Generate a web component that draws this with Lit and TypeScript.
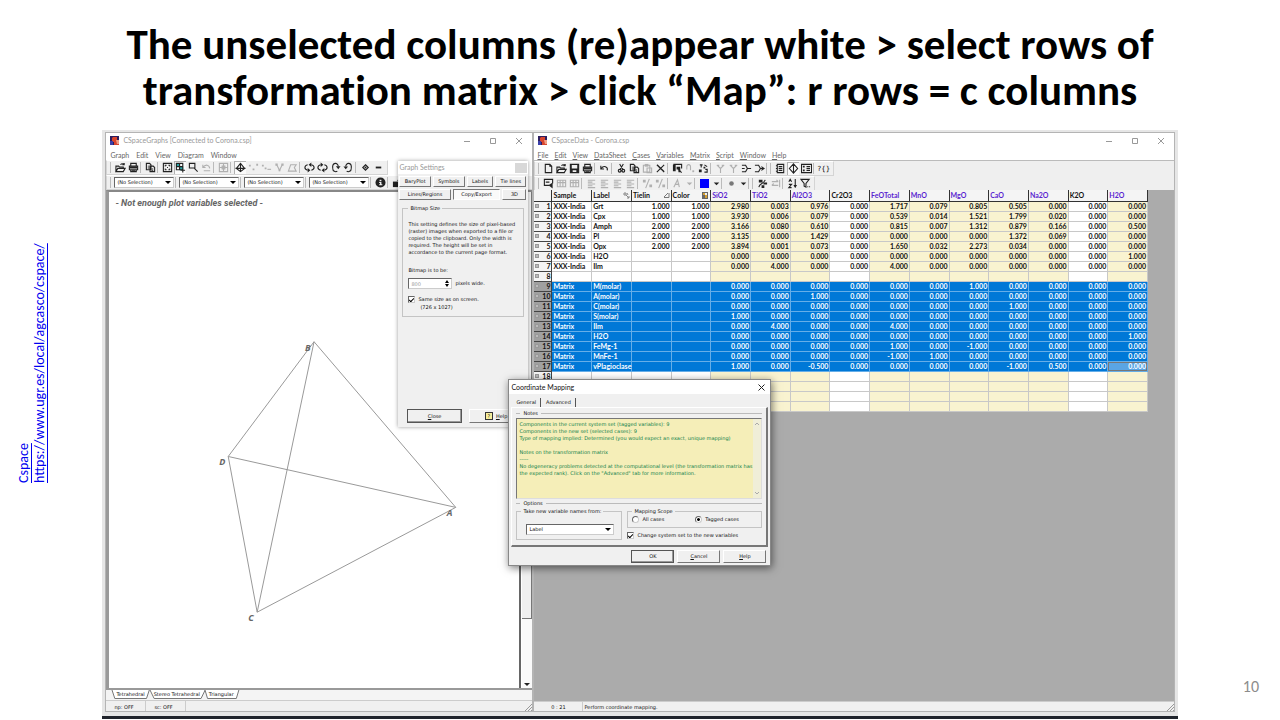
import { LitElement, html, svg, css, nothing } from "lit";
import { customElement, property, state } from "lit/decorators.js";
import { classMap } from "lit/directives/class-map.js";

/* Toolbar glyphs on a 12x12 grid: s = stroke path, f = filled path */
const ICONS: Record<string, { s?: string; f?: string; teal?: string }> = {
  open: { s: "M1 10.500V4.500H4L5 5.500H9V7M1 10.500L3 7H11L9 10.500ZM6 3C7 1.500 9 1.500 10 3M10 1V3H8" },
  print: { s: "M3 4V1.500H9V4M1.500 4.500H10.500V8.500H1.500ZM3 8V10.500H9V8", f: "M2 5H10V7H2ZM4 9H8V10H4Z" },
  copy: { s: "M1.500 1.500H5L6.500 3V8.500H1.500ZM5.500 4.500H9L10.500 6V10.500H5.500Z", f: "M3 4H5V5H3ZM3 6H5V7H3ZM7 7H9V8H7ZM7 8.500H9V9.500H7Z" },
  fit: { s: "M1.500 1.500H10.500V10.500H1.500Z", f: "M3 3H5V4H4V5H3ZM9 3V5H8V4H7V3ZM3 9V7H4V8H5V9ZM9 9H7V8H8V7H9ZM5.500 5.500H6.500V6.500H5.500Z" },
  grid: { s: "M1.500 1.500H8.500V8.500H1.500ZM1.500 5H8.500M5 1.500V8.500M6 9H11M8.500 6.500V11.500", teal: "M1 1H5V5H1ZM5 5H9V9H5Z" },
  zoom: { s: "M1.500 1.500H7.500V6.500H1.500ZM7 7L10.500 10.500" },
  undo: { s: "M2 3V6H5M2 6C5 2 9 3 9.500 7M3 9.500H10" },
  target: { s: "M1.500 1.500H10.500V10.500H1.500ZM6 2V10M2 6H10M4.500 4.500H7.500V7.500H4.500Z" },
  cross: { s: "M6 1.500L10.500 7L6 10.500L1.500 7ZM0.500 7H11.500M6 1V11" },
  dots: { f: "M1 3H3V5H1ZM5 7H7V9H5ZM9 2H11V4H9Z" },
  seg: { f: "M1 3H3V5H1ZM4 6H6V8H4Z", s: "M7 8H11" },
  tri: { s: "M3 3L6 9L9 3", f: "M1.500 1.500H4V4H1.500ZM8 1.500H10.500V4H8ZM5 8H7V10H5Z" },
  region: { s: "M1.500 10L4 3H10L8 6L10 10Z" },
  rotl: { s: "M4 3C0 4 0 8 4 9M8 3C12 4 12 8 8 9", f: "M4 6.500L7 9L4 11.500ZM8 .5L5 3L8 5.500Z" },
  rotr: { s: "M4 3C0 4 0 8 4 9M8 3C12 4 12 8 8 9", f: "M4 .5L7 3L4 5.500ZM8 6.500L5 9L8 11.500Z" },
  rotu: { s: "M3 7C2 0 9 0 9 5M8 10C6 11.500 3 10 3 7", f: "M6.500 4.500H11.500L9 8Z" },
  rotd: { s: "M3 5C3 0 10 0 9 7M4 10C6 11.500 9 10 9 7", f: "M.5 5H5.500L3 8Z" },
  plus: { s: "M6 3L9 6L6 9L3 6Z", f: "M5 5H7V7H5Z" },
  minus: { f: "M3 5H9V7H3Z" },
  info: { f: "M6 0.500A5.500 5.500 0 1 0 6 11.500A5.500 5.500 0 1 0 6 .5ZM5 3H7V4.500H5ZM4.500 5.500H7V8H8V9H4.500V8H5.500V6.500H4.500Z" },
  chip: { f: "M1 5H8V11H1Z", s: "M6 4L10 1" },
  fresh: { s: "M2.500 1.500H7.500L9.500 3.500V10.500H2.500ZM7.500 1.500V3.500H9.500" },
  save: { s: "M1.500 1.500H10.500V10.500H1.500Z", f: "M1.500 1.500H3V6H9V1.500H10.500V10.500H8V8H4V10.500H1.500Z" },
  back: { s: "M2 3V6.500H5.500M2.500 6C5 2 10 4 9 8" },
  cut: { s: "M4 1L7.500 7M8 1L4.500 7M4 7A1.500 1.500 0 1 0 4 10A1.500 1.500 0 1 0 4 7M8 7A1.500 1.500 0 1 0 8 10A1.500 1.500 0 1 0 8 7" },
  paste: { s: "M1.500 2.500H8.500V10H1.500ZM5.500 5.500H10.500V10.500H5.500Z", f: "M3 1H7V4H3Z" },
  del: { s: "M2 2L10 10M10 2L2 10M2.500 2L10 9.500" },
  find: { s: "M1.500 1.500H10.500V6M7 7L10.500 10.500", f: "M1 2H4V9H1ZM5 4H9V10H7V7H5Z" },
  next: { s: "M2 7V4C2 1 6 1 6 4V8", f: "M8 8H10V10H8Z" },
  repl: { s: "M2 2H5M3.500 2V5M8 7H10V10H7M7 2L10 4", f: "M1 7H4V10H1ZM6 4H8V6H6Z" },
  fork: { s: "M2 2L6 6V11M10 2L6 6M4 2V4M8 2V4" },
  merge: { s: "M1 2.500H5L7 6H11M1 9.500H5L7 6M1 6H4" },
  split: { s: "M1 2.500H5L7 6H11M1 9.500H5L7 6M8 4L11 6L8 8" },
  note: { s: "M2.500 1.500H9.500V10.500H2.500ZM4 4H8M4 6H8M4 8H8M1 3H3M1 6H3M1 9H3" },
  diamond: { s: "M6 1L10.500 6L6 11L1.500 6ZM6 1V11" },
  props: { s: "M0.500 1.500H11.500V10.500H0.500ZM6 4H10M6 6H10M6 8H10", f: "M2 3H4V5H2ZM2 7H4V9H2Z" },
  tag: { s: "M7 8H1.500V1.500H10.500V6M3 4.500H7", f: "M10.500 5V11.500L6 8Z" },
  cols: { s: "M1.500 2.500H10.500V9.500H1.500ZM1.500 5H10.500M4.500 3V9.500M7.500 3V9.500" },
  align: { s: "M2 2.500H10M2 4.500H7M2 6.500H10M2 8.500H7M2 10.500H10" },
  dec: { s: "M8 1L4 11", f: "M1 2H4V5H1ZM8 7H11V10H8Z" },
  font: { s: "M2 10L6 2L8 10M3 7H8" },
  drop: { f: "M3 5H9L6 8Z" },
  dot: { f: "M6 3.500A2.500 2.500 0 1 0 6 8.500A2.500 2.500 0 1 0 6 3.500Z" },
  brush: { s: "M2 10C3 5 7 7 9 2", f: "M2 2H6V5H2ZM7 5H11V7H7ZM5 8H8V11H5Z" },
  fill: { s: "M2 4H9M7 2L9 4M2 8H9M4 6L2 8M10.500 2V10" },
  sort: { s: "M2 4L3.500 1.500L5 4M2 7H5L2 10.500H5M9 1V10", f: "M7 7.500H11L9 11Z" },
  filter: { s: "M1 1.500H10L6.500 6V10L4.500 9V6Z", f: "M8 9H9V10H8ZM10 9H11V10H10Z" },
};

const icon = (name: string, color = "#222") => {
  const i = ICONS[name];
  return html`<svg class="ico" viewBox="0 0 12 12" aria-hidden="true">
    ${i.teal ? svg`<path d=${i.teal} fill="#2aa5a5"/>` : nothing}
    ${i.s ? svg`<path d=${i.s} fill="none" stroke=${color} stroke-width="1.2"/>` : nothing}
    ${i.f ? svg`<path d=${i.f} fill=${color} fill-rule="evenodd"/>` : nothing}
  </svg>`;
};

/* "|" separates groups; a trailing "-" is disabled, a trailing "*" is pressed */
const bar = (items: string) => items.split(" ").map((n) => {
  if (n === "|") return html`<span class="sep"></span>`;
  const off = n.endsWith("-");
  const on = n.endsWith("*");
  const key = n.replace(/[-*]$/, "");
  return html`<button class=${classMap({ tool: true, on, narrow: key === "drop" })} ?disabled=${off} aria-label=${key}>${
    key === "blue" ? html`<span class="swatch"></span>` : key === "help" ? "?{}" : icon(key, off ? "#b0b0b0" : key === "dot" ? "#777" : "#222")
  }</button>`;
});

const shared = css`
  * { box-sizing: border-box; }
  button, select, input { font: inherit; color: inherit; margin: 0; }
  .ico { display: block; width: 12px; height: 12px; }
  .titlebar { display: flex; align-items: center; height: 15px; padding: 0 1px 0 4px; gap: 4px; color: #999; background: #fff; }
  .titlebar svg { display: block; }
  .grow { flex: 1; }
  .winbtn { width: 24px; height: 12px; padding: 0; border: 0; background: none; display: grid; place-items: center; margin-left: -2px; }
  .menu { display: flex; gap: 7px; padding: 0 4px; height: 12px; color: #666; background: #fff; }
  .menu button { border: 0; background: none; padding: 2px 0 0; line-height: 11px; }
  .toolbar { display: flex; align-items: center; width: max-content; max-width: 100%; height: 15px; padding: 0 3px; gap: 1px; background: #f0f0f0; border: 1px solid #d4d4d4; border-top-color: #fff; overflow: hidden; }
  .tool { flex: none; min-width: 12px; height: 13px; padding: 0; border: 0; background: none; font: 7px "DejaVu Sans", sans-serif; line-height: 12px; display: grid; place-items: center; }
  .tool.on { background: #fbfbfb; box-shadow: inset 1px 1px #b0b0b0; }
  .tool.narrow { min-width: 9px; width: 9px; }
  .tool .ico { width: 11px; height: 11px; }
  .swatch { display: block; width: 9px; height: 9px; background: #00f; }
  .sep { flex: none; width: 3px; height: 11px; border-left: 1px solid #bbb; }
  .small { font: 5px/7px "DejaVu Sans", sans-serif; color: #111; }
  .push { background: #f0f0f0; border: 1px solid; border-color: #fff #777 #777 #fff; padding: 0; text-align: center; }
  .push.default { border-color: #555; box-shadow: inset -1px -1px #999; }
  select { appearance: none; border: 1px solid; border-color: #666 #ccc #ccc #666; border-radius: 0; padding: 0 2px; background: #fff; }
  .combo { position: relative; display: block; }
  .combo select { width: 100%; height: 100%; display: block; }
  .combo::after { content: ""; position: absolute; right: 3px; top: 4px; border: 3px solid transparent; border-top-color: #000; border-bottom: 0; }
  fieldset { margin: 0; border: 1px solid #c4c4c4; min-width: 0; padding: 0 4px; }
  legend { padding: 0 2px; }
  .tick { appearance: none; flex: none; width: 7px; height: 7px; border: 1px solid; border-color: #666 #ccc #ccc #666; background: #fff; display: grid; place-items: center; overflow: hidden; }
  .tick:checked::before { content: ""; width: 2px; height: 4px; border: solid #000; border-width: 0 1px 1px 0; transform: rotate(45deg); }
  .tick.radio { border-radius: 50%; }
  .tick.radio:checked::before { width: 3px; height: 3px; border: 0; border-radius: 50%; background: #000; }
  .line { display: flex; align-items: center; gap: 3px; }
`;

const logo = html`<svg width="9" height="9" viewBox="0 0 9 9" aria-hidden="true">
  <rect width="9" height="9" fill="#2c1d5e"/><path d="M3 1H7V5L9 7V9H4V6H2V2Z" fill="#d8452e"/><path d="M6 4H9V8H7Z" fill="#f0a088"/><path d="M0 5H3V9H0Z" fill="#3a3fa8"/></svg>`;
const winButtons = html`
  <button class="winbtn" aria-label="Minimize"><svg width="6" height="6"><path d="M0 3.500H6" stroke="#999"/></svg></button>
  <button class="winbtn" aria-label="Maximize"><svg width="6" height="6"><path d="M.5 .5H5.500V5.500H.5Z" fill="none" stroke="#999"/></svg></button>
  <button class="winbtn" aria-label="Close"><svg width="6" height="6"><path d="M0 0L6 6M6 0L0 6" stroke="#999"/></svg></button>`;

@customElement("graph-window")
class GraphWindow extends LitElement {
  static styles = [shared, css`
    :host { display: flex; flex-direction: column; min-width: 0; background: #fff; border: 1px solid #b4b4b4; font: 7px/9px Lato, sans-serif; }
    .selects { width: 100%; border-right: 0; }
    .selects .combo { width: 60px; height: 11px; flex: none; }
    .work { flex: 1; display: flex; min-height: 0; border-left: 3px solid #999; border-top: 2px solid #888; background: #fff; border-bottom: 2px solid #999; }
    .canvas { flex: 1; display: flex; flex-direction: column; min-width: 0; border-right: 2px solid #666; }
    .msg { margin: 0; padding: 5px 6px 0; font: italic bold 9px/12px Roboto, sans-serif; color: #666; }
    .plot { display: block; width: 100%; flex: 1; min-height: 0; }
    .vertex { font: italic bold 9px "Noto Sans", sans-serif; fill: #666; }
    .scroll { width: 10px; margin-left: 1px; display: flex; flex-direction: column; align-items: center; background: #fafafa; }
    .thumb { width: 100%; flex: 0 0 86%; background: #f0f0f0; border: solid #777; border-width: 0 1px 1px 0; }
    .down { border: 0; padding: 0; background: none; margin-top: auto; height: 10px; width: 10px; }
    .down .ico { margin-left: -1px; }
    .tabs { display: flex; height: 10px; padding: 0 6px; background: #f4f4f4; }
    .tab { border: 0; background: none; padding: 0 5px 0 4px; position: relative; height: 9px; line-height: 9px; isolation: isolate; }
    .tab svg { position: absolute; inset: 0; width: 100%; height: 9px; z-index: -1; overflow: visible; }
    .status { display: flex; height: 11px; background: #f0f0f0; border-top: 1px solid #ccc; }
    .status span { width: 40px; padding: 3px 8px 0; border-right: 1px solid #ccc; white-space: nowrap; }
    .status .last { flex: 1; border: 0; }
    .grip { width: 8px; height: 8px; align-self: end; }
  `];
  render() {
    return html`
      <div class="titlebar">${logo}<span class="grow">CSpaceGraphs [Connected to Corona.csp]</span>${winButtons}</div>
      <nav class="menu">${["Graph", "Edit", "View", "Diagram", "Window"].map((m) => html`<button>${m}</button>`)}</nav>
      <div class="toolbar">${bar("| open print | copy | fit grid* zoom undo- | target- | cross* dots- seg- tri- region- | rotl rotr rotu rotd | plus minus")}</div>
      <div class="toolbar selects small">
        ${[1, 2, 3, 4].map((n) => html`<span class="sep"></span><span class="combo"><select aria-label="Variable ${n}"><option>(No Selection)</option></select></span>`)}
        ${bar("| info | chip")}
      </div>
      <div class="work">
        <div class="canvas">
          <p class="msg">- Not enough plot variables selected -</p>
          <svg class="plot" viewBox="-1 17 410 480" role="img" aria-label="Tetrahedron">
            <path d="M204 150L118 265L147 421L346 316ZM204 150L147 421M118 265L346 316" fill="none" stroke="#999"/>
            <text class="vertex" x="195" y="159">B</text><text class="vertex" x="109" y="274">D</text>
            <text class="vertex" x="337" y="325">A</text><text class="vertex" x="138" y="430">C</text>
          </svg>
        </div>
        <div class="scroll"><div class="thumb"></div><button class="down" aria-label="Scroll down">${icon("drop")}</button></div>
      </div>
      <div class="tabs small">${["Tetrahedral", "Stereo Tetrahedral", "Triangular"].map((t) => html`<button class="tab"><svg viewBox="0 0 40 9" preserveAspectRatio="none" aria-hidden="true"><path d="M0 0L3 8.500H37L40 0" fill="#fff" stroke="#777" vector-effect="non-scaling-stroke"/></svg>${t}</button>`)}</div>
      <div class="status small"><span>np: OFF</span><span>sc: OFF</span><span class="last"></span><svg class="grip" aria-hidden="true"><path d="M1 8L8 1M4 8L8 4M7 8L8 7" stroke="#999"/></svg></div>`;
  }
}

const COLS = ["Sample", "Label", "Tielin", "Color", "SiO2", "TiO2", "Al2O3", "Cr2O3", "FeOTotal", "MnO", "MgO", "CaO", "Na2O", "K2O", "H2O"];
const TAGGED = new Set(["SiO2", "TiO2", "Al2O3", "FeOTotal", "MnO", "MgO", "CaO", "Na2O", "H2O"]);
const LAST_CASE = 18;
const DATA = `XXX-India|Grt|1.000|1.000|2.980|0.003|0.976|0.000|1.717|0.079|0.805|0.505|0.000|0.000|0.000
XXX-India|Cpx|1.000|1.000|3.930|0.006|0.079|0.000|0.539|0.014|1.521|1.799|0.020|0.000|0.000
XXX-India|Amph|2.000|2.000|3.166|0.080|0.610|0.000|0.815|0.007|1.312|0.879|0.166|0.000|0.500
XXX-India|Pl|2.000|2.000|3.135|0.000|1.429|0.000|0.000|0.000|0.000|1.372|0.069|0.000|0.000
XXX-India|Opx|2.000|2.000|3.894|0.001|0.073|0.000|1.650|0.032|2.273|0.034|0.000|0.000|0.000
XXX-India|H2O|||0.000|0.000|0.000|0.000|0.000|0.000|0.000|0.000|0.000|0.000|1.000
XXX-India|Ilm|||0.000|4.000|0.000|0.000|4.000|0.000|0.000|0.000|0.000|0.000|0.000
||||||||||||||
Matrix|M(molar)|||0.000|0.000|0.000|0.000|0.000|0.000|1.000|0.000|0.000|0.000|0.000
Matrix|A(molar)|||0.000|0.000|1.000|0.000|0.000|0.000|0.000|0.000|0.000|0.000|0.000
Matrix|C(molar)|||0.000|0.000|0.000|0.000|0.000|0.000|0.000|1.000|0.000|0.000|0.000
Matrix|S(molar)|||1.000|0.000|0.000|0.000|0.000|0.000|0.000|0.000|0.000|0.000|0.000
Matrix|Ilm|||0.000|4.000|0.000|0.000|4.000|0.000|0.000|0.000|0.000|0.000|0.000
Matrix|H2O|||0.000|0.000|0.000|0.000|0.000|0.000|0.000|0.000|0.000|0.000|1.000
Matrix|FeMg-1|||0.000|0.000|0.000|0.000|1.000|0.000|-1.000|0.000|0.000|0.000|0.000
Matrix|MnFe-1|||0.000|0.000|0.000|0.000|-1.000|1.000|0.000|0.000|0.000|0.000|0.000
Matrix|vPlagioclase|||1.000|0.000|-0.500|0.000|0.000|0.000|0.000|-1.000|0.500|0.000|0.000
||||||||||||||
||||||||||||||
||||||||||||||
||||||||||||||`.split("\n").map((r) => r.split("|"));

@customElement("data-window")
class DataWindow extends LitElement {
  @state() from = 9;
  @state() to = 17;
  static styles = [shared, css`
    :host { display: flex; flex-direction: column; min-width: 0; background: #fff; border: 1px solid #b4b4b4; font: 7px/9px Lato, sans-serif; }
    .menu { gap: 6px; padding-left: 3px; }
    .menu button::first-letter { text-decoration: underline; }
    .bars { background: #efefef; border-top: 1px solid #bbb; height: 30px; }
    .sheet { flex: 1; min-height: 0; background: #ababab; overflow: hidden; }
    table { width: 96%; table-layout: fixed; border-collapse: separate; border-spacing: 0; font: bold 7px/8px Lato, sans-serif; color: #111; }
    .rowhead { width: 18px; }
    th, td { padding: 0 1px 1px; height: 10px; border: solid #c8c8c8; border-width: 0 1px 1px 0; background: #fff; text-align: right; white-space: nowrap; }
    thead th { height: 12px; text-align: left; background: #f4f4f4; border-color: #333; }
    .name { display: flex; align-items: center; justify-content: space-between; }
    .tag { color: #5a1fd0; }
    .text { text-align: left; }
    tbody th { border-color: #444; background: #f4f4f4; }
    tbody th div { display: flex; align-items: center; justify-content: space-between; height: 8px; }
    .box { width: 4px; height: 4px; border: 1px solid #999; background: #bbb; }
    .y { background: #f9f3d0; }
    .sel td { background: #0078d7; color: #fff; border-color: #66aee8; }
    .sel th { background: #a0a0a0; }
    .sel .cur { background: #5aa5e4; box-shadow: inset 0 0 0 1px #777; }
    .status { display: flex; height: 10px; background: #f0f0f0; border-top: 1px solid #ccc; }
    .status span { width: 49px; padding: 2px 0 0; text-align: center; border-right: 1px solid #ccc; }
    .status .last { flex: 1; text-align: left; padding-left: 1px; border: 0; }
    .grip { width: 8px; height: 8px; align-self: end; }
  `];
  render() {
    return html`
      <div class="titlebar">${logo}<span class="grow">CSpaceData - Corona.csp</span>${winButtons}</div>
      <nav class="menu">${["File", "Edit", "View", "DataSheet", "Cases", "Variables", "Matrix", "Script", "Window", "Help"].map((m) => html`<button>${m}</button>`)}</nav>
      <div class="bars">
        <div class="toolbar">${bar("| fresh open save print | back | cut copy paste- del | find next- repl | fork- fork- merge split | | note diamond* props | help")}</div>
        <div class="toolbar">${bar("| tag cols- cols- | align- align- align- align- | dec- dec- | font- drop- | blue drop | dot drop | | brush fill- | sort filter")}</div>
      </div>
      <div class="sheet">
        <table>
          <thead><tr><th class="rowhead"></th>${COLS.map((c) => html`<th><div class=${classMap({ name: true, tag: TAGGED.has(c) })}>${c}${this.mark(c)}</div></th>`)}</tr></thead>
          <tbody>${DATA.map((row, i) => {
            const n = i + 1;
            const sel = n >= this.from && n <= this.to;
            return html`<tr class=${classMap({ sel })}><th><div><span class="box"></span>${n <= LAST_CASE ? n : nothing}</div></th>${row.map((v, j) => html`<td class=${classMap({
              text: j < 2, y: TAGGED.has(COLS[j]), cur: n === this.to && j === row.length - 1 })}>${v}</td>`)}</tr>`;
          })}</tbody>
        </table>
      </div>
      <div class="status small"><span>0 : 21</span><span class="last">Perform coordinate mapping.</span><svg class="grip" aria-hidden="true"><path d="M1 8L8 1M4 8L8 4M7 8L8 7" stroke="#999"/></svg></div>`;
  }
  mark(c: string) {
    const box = (g: unknown) => html`<svg width="7" height="7" viewBox="0 0 7 7" aria-hidden="true">${g}</svg>`;
    if (c === "Label") return box(svg`<path d="M1 1H3V3H1ZM3 3L6 6M4 1L5 3M4 6H6V4" fill="none" stroke="#888"/>`);
    if (c === "Tielin") return box(svg`<path d="M1 5L5 1M1 5.500H6V1" fill="none" stroke="#777"/>`);
    if (c === "Color") return box(svg`<rect width="6" height="7" fill="#666"/><path d="M1 1H3V3H1ZM3 3H5V6H3Z" fill="#d8a030"/><path d="M3 1H5V3H3Z" fill="#eee"/>`);
    return nothing;
  }
}

@customElement("graph-settings")
class GraphSettings extends LitElement {
  @property() tab = "Copy/Export";
  static styles = [shared, css`
    :host { display: flex; flex-direction: column; background: #f0f0f0; box-shadow: 0 0 4px #0006; font: 5px/7px "DejaVu Sans", sans-serif; color: #111; }
    .head { display: flex; justify-content: space-between; align-items: center; height: 13px; padding: 0 1px; background: #fff; font: 7px/9px Lato, sans-serif; color: #999; }
    .x { width: 11px; height: 10px; border: 0; background: #d8d8d8; }
    .tabs { display: flex; gap: 2px; padding: 2px 2px 0 1px; }
    .tabs .push { flex: 1 1 auto; height: 11px; }
    .tabs .wide { flex-grow: 3; }
    .on { background: #fafafa; border-color: #777 #fff #fff #777; }
    .size { margin: 5px 4px 0; height: 112px; padding: 0 5px; }
    .note { margin: 9px 0 11px; white-space: nowrap; }
    .px { width: 44px; height: 11px; border: 1px solid; border-color: #666 #ccc #ccc #666; padding: 0 2px; color: #999; background: #fff; appearance: none; }
    .spin { position: relative; display: block; }
    .spin::before, .spin::after { content: ""; position: absolute; right: 3px; border: 2px solid transparent; }
    .spin::before { top: 2px; border-bottom: 3px solid #000; border-top: 0; }
    .spin::after { bottom: 2px; border-top: 3px solid #000; border-bottom: 0; }
    .same { margin-top: 7px; }
    .dim { margin: 1px 0 0 12px; }
    .first { margin-top: 4px; }
    .foot { display: flex; gap: 7px; padding: 0 5px 4px 9px; margin-top: auto; }
    .foot .push { flex: 1; height: 14px; display: flex; align-items: center; justify-content: center; gap: 3px; }
    .q { width: 8px; height: 8px; border: 1px solid #333; background: #f6ee9c; }
    u { text-underline-offset: 1px; }
  `];
  render() {
    const t = (n: string, wide = false) => html`<button class=${classMap({ push: true, on: n === this.tab, wide })} @click=${() => (this.tab = n)}>${n}</button>`;
    return html`
      <div class="head"><span>Graph Settings</span><button class="x" aria-label="Close"></button></div>
      <div class="tabs">${["BaryPlot", "Symbols", "Labels", "Tie lines"].map((n) => t(n))}</div>
      <div class="tabs">${t("Lines/Regions", true)}${t("Copy/Export", true)}${t("3D", true)}</div>
      <fieldset class="size"><legend>Bitmap Size</legend>
        <p class="note">This setting defines the size of pixel-based<br>(raster) images when exported to a file or<br>copied to the clipboard. Only the width is<br>required. The height will be set in<br>accordance to the current page format.</p>
        <label for="w">Bitmap is to be:</label>
        <div class="line first"><span class="spin"><input class="px" id="w" value="800" disabled></span>pixels wide.</div>
        <label class="line same"><input class="tick" type="checkbox" checked>Same size as on screen.</label>
        <p class="dim">(726 x 1027)</p>
      </fieldset>
      <div class="foot"><button class="push default"><span><u>C</u>lose</span></button><button class="push"><span class="q">?</span><span><u>H</u>elp</span></button></div>`;
  }
}

@customElement("mapping-dialog")
class MappingDialog extends LitElement {
  static styles = [shared, css`
    :host { display: flex; flex-direction: column; background: #f0f0f0; border: 1px solid #888; box-shadow: 1px 2px 8px #0008; font: 5px/7px "DejaVu Sans", sans-serif; color: #111; }
    .head { display: flex; justify-content: space-between; align-items: center; height: 14px; padding: 0 5px 0 2px; background: #fff; font: 7px/9px Lato, sans-serif; color: #111; }
    .x { border: 0; padding: 0; background: none; }
    .x svg { display: block; }
    .tabs { display: flex; padding: 4px 2px 0; }
    .tab { border: 0; border-right: 1px solid #555; background: none; padding: 0 4px 0 5px; height: 9px; }
    .panel { margin: 0 2px; padding: 1px 4px 5px; border: solid; border-color: #fff #777 #777 #fff; border-width: 1px 2px 2px 1px; }
    .rule { display: flex; align-items: center; gap: 3px; height: 9px; margin: 0; font-size: 5px; font-weight: normal; }
    .rule::before { content: ""; width: 4px; border-top: 1px solid #bbb; }
    .rule::after { content: ""; flex: 1; border-top: 1px solid #bbb; }
    .notes { display: flex; height: 81px; border: 1px solid; border-color: #777 #ddd #ddd #777; background: #f5eeb8; color: #0e8048; }
    .notes p { flex: 1; min-width: 0; margin: 0; padding: 2px 0 0 2px; white-space: pre; }
    .scroll { width: 8px; background: #f0eed8; display: flex; flex-direction: column; justify-content: space-between; align-items: center; padding: 3px 0; }
    .cols { display: grid; grid-template-columns: 106px 1fr; gap: 5px; }
    .from { height: 32px; }
    .from legend, .scope legend { line-height: 7px; }
    .from .combo { margin: 9px 3px 0 5px; height: 11px; }
    .scope { height: 20px; margin-right: 0; }
    .radios { display: flex; gap: 31px; margin-top: 1px; }
    .change { margin-top: 4px; }
    .foot { display: flex; justify-content: flex-end; gap: 3px; padding: 3px 4px 2px; }
    .foot .push { width: 43px; height: 13px; }
  `];
  render() {
    const arrow = (d: string) => html`<svg width="6" height="4" aria-hidden="true"><path d=${d} fill="none" stroke="#aaa"/></svg>`;
    return html`
      <div class="head"><span>Coordinate Mapping</span><button class="x" aria-label="Close"><svg width="7" height="7"><path d="M.5 .5L6.500 6.500M6.500 .5L.5 6.500" stroke="#222"/></svg></button></div>
      <div class="tabs"><button class="tab">General</button><button class="tab">Advanced</button></div>
      <div class="panel">
        <h3 class="rule">Notes</h3>
        <div class="notes"><p>Components in the current system set (tagged variables): 9
Components in the new set (selected cases): 9
Type of mapping implied: Determined (you would expect an exact, unique mapping)

Notes on the transformation matrix
-----
No degeneracy problems detected at the computational level (the transformation matrix has
the expected rank). Click on the "Advanced" tab for more information.</p>
          <div class="scroll">${arrow("M1 3L3 1L5 3")}${arrow("M1 1L3 3L5 1")}</div></div>
        <h3 class="rule">Options</h3>
        <div class="cols">
          <fieldset class="from"><legend>Take new variable names from:</legend>
            <span class="combo"><select aria-label="Take new variable names from"><option>Label</option></select></span></fieldset>
          <div>
            <fieldset class="scope"><legend>Mapping Scope</legend>
              <div class="radios"><label class="line"><input class="tick radio" type="radio" name="s">All cases</label>
              <label class="line"><input class="tick radio" type="radio" name="s" checked>Tagged cases</label></div></fieldset>
            <label class="line change"><input class="tick" type="checkbox" checked>Change system set to the new variables</label>
          </div>
        </div>
      </div>
      <div class="foot"><button class="push default">OK</button><button class="push"><u>C</u>ancel</button><button class="push"><u>H</u>elp</button></div>`;
  }
}

@customElement("app-root")
class AppRoot extends LitElement {
  static styles = css`
    * { box-sizing: border-box; }
    :host { display: grid; grid-template: auto minmax(0, 1fr) / 8% minmax(0, 1fr) 8%; height: 100vh; background: #fff; font-family: Carlito, Lato, sans-serif; }
    h1 { grid-column: 1 / -1; margin: 0; padding: 22px 100px 16px; font-size: 43px; line-height: 46px; text-align: center; color: #000; font-variant-ligatures: none; }
    .source { writing-mode: vertical-rl; transform: rotate(180deg); justify-self: end; align-self: start; margin: 110px 54px 0 0; font-size: 14px; line-height: 16px; height: 243px; }
    .source a { color: #0000f0; display: block; }
    .desk { position: relative; display: flex; padding: 2px 3px 4px; background: #e6e6e6; border-bottom: 3px solid #20242c; margin-bottom: 1px; }
    graph-window { flex: 40 1 0; }
    data-window { flex: 60 1 0; }
    graph-settings { position: absolute; left: 296px; top: 31px; width: 130px; height: 266px; }
    mapping-dialog { position: absolute; left: 406px; top: 249px; width: 263px; }
    .num { align-self: end; margin: 0 21px 24px; text-align: right; font-size: 16px; line-height: 18px; color: #8c8c8c; }
  `;
  render() {
    return html`
      <h1>The unselected columns (re)appear white &gt; select rows of transformation matrix &gt; click “Map”: r rows = c columns</h1>
      <div class="source"><a href="https://www.ugr.es/local/agcasco/cspace/">Cspace</a><a href="https://www.ugr.es/local/agcasco/cspace/">https://www.ugr.es/local/agcasco/cspace/</a></div>
      <main class="desk">
        <graph-window></graph-window>
        <data-window></data-window>
        <graph-settings></graph-settings>
        <mapping-dialog></mapping-dialog>
      </main>
      <div class="num">10</div>`;
  }
}
